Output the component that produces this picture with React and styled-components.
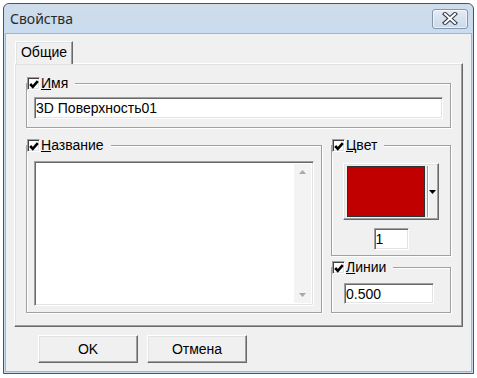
import React from 'react'
import styled, { createGlobalStyle } from 'styled-components'

const GlobalStyle = createGlobalStyle`
  body {
    margin: 0;
    background: #ffffff;
    font-family: "Liberation Sans", Arial, sans-serif;
    font-size: 14px;
    color: #000;
  }
`

const Window = styled.div`
  box-sizing: border-box;
  margin: 3px 0 0 3px;
  width: 471px;
  height: 371px;
  border: 1px solid #4a5461;
  border-radius: 6px 6px 0 0;
  background: #c9dbee;
  padding: 0 1px 1px;
  display: flex;
  flex-direction: column;
`

const TitleBar = styled.div`
  height: 29px;
  flex: none;
  display: flex;
  align-items: center;
  justify-content: space-between;
  padding: 0 4px 0 5px;
  background: linear-gradient(#cfdcea, #c9dcf0);
  border-radius: 5px 5px 0 0;
`

const Title = styled.span`
  font-family: "Noto Sans", "Open Sans", sans-serif;
  font-size: 14px;
  color: #2a2a2a;
`

const CloseButton = styled.div`
  box-sizing: border-box;
  width: 36px;
  height: 20px;
  border: 1px solid #8596ab;
  border-radius: 3px;
  background: linear-gradient(#e3ebf5, #cad9ea);
  box-shadow: inset 0 0 0 1px rgba(255, 255, 255, 0.6);
  display: flex;
  align-items: center;
  justify-content: center;
`

const Client = styled.div`
  flex: 1;
  background: #f0f0f0;
  border: 1px solid #a8b5c4;
  padding: 7px 8px 0 8px;
  display: flex;
  flex-direction: column;
`

const TabStrip = styled.div`
  display: flex;
  padding-left: 1px;
  height: 22px;
  position: relative;
  z-index: 1;
`

const Tab = styled.div`
  box-sizing: border-box;
  width: 58px;
  height: 23px;
  border-style: solid;
  border-width: 1px 1px 0 1px;
  border-color: #ffffff #696969 transparent #ffffff;
  box-shadow: inset -1px 0 0 #a0a0a0, inset 1px 1px 0 #e3e3e3;
  background: #f0f0f0;
  display: flex;
  align-items: center;
  justify-content: center;
  padding-bottom: 2px;
`

const TabPanel = styled.div`
  box-sizing: border-box;
  height: 264px;
  border: 1px solid;
  border-color: #ffffff #696969 #696969 #ffffff;
  box-shadow: inset -1px -1px 0 #a0a0a0, inset 1px 1px 0 #e3e3e3;
  padding: 19px 11px 13px 11px;
  display: flex;
  flex-direction: column;
  gap: 17px;
`

const Group = styled.div`
  position: relative;
  box-sizing: border-box;
  height: ${p => p.$h}px;
  border: 1px solid #a0a0a0;
  box-shadow: inset 1px 1px 0 #ffffff, 1px 1px 0 #ffffff;
  padding: ${p => p.$pad};
  display: flex;
  flex-direction: column;
  align-items: ${p => (p.$center ? 'center' : 'stretch')};
`

const Legend = styled.div`
  position: absolute;
  top: -8px;
  left: 0;
  display: flex;
  align-items: center;
  gap: 1px;
  padding-right: 7px;
  background: #f0f0f0;
  line-height: 15px;
  white-space: nowrap;
`

const CheckBox = styled.span`
  box-sizing: border-box;
  width: 13px;
  height: 13px;
  border: 1px solid;
  border-color: #a0a0a0 #ffffff #ffffff #a0a0a0;
  box-shadow: inset 1px 1px 0 #404040, inset -1px -1px 0 #e3e3e3;
  background: #fff;
  display: flex;
  align-items: center;
  justify-content: center;
  padding: 1px 0 0 1px;
`

const Row = styled.div`
  display: flex;
  gap: 9px;
`

const Column = styled.div`
  width: 120px;
  display: flex;
  flex-direction: column;
  gap: 11px;
`

const Sunken = styled.div`
  box-sizing: border-box;
  width: ${p => (p.$w ? `${p.$w}px` : 'auto')};
  height: ${p => p.$h}px;
  border: 1px solid;
  border-color: #a0a0a0 #ffffff #ffffff #a0a0a0;
  box-shadow: inset 1px 1px 0 #696969, inset -1px -1px 0 #e3e3e3;
  background: #fff;
  display: flex;
  align-items: ${p => (p.$area ? 'stretch' : 'center')};
  padding: ${p => (p.$area ? '2px 2px 2px 2px' : '0 0 0 1px')};
  line-height: 16px;
`

const AreaText = styled.div`
  flex: 1;
`

const ScrollBar = styled.div`
  width: 17px;
  background: #f3f3f3;
  display: flex;
  flex-direction: column;
  justify-content: space-between;
  align-items: center;
  padding: 6px 0;
`

const ColorButton = styled.div`
  box-sizing: border-box;
  width: 96px;
  height: 57px;
  border: 1px solid;
  border-color: #ffffff #696969 #696969 #ffffff;
  box-shadow: inset -1px -1px 0 #a0a0a0, inset 1px 1px 0 #e3e3e3;
  background: #f0f0f0;
  display: flex;
  padding: 2px 1px 2px 3px;
`

const Swatch = styled.div`
  box-sizing: border-box;
  width: 78px;
  border: 1px solid #303030;
  background: ${p => p.$color};
`

const DropPart = styled.div`
  flex: 1;
  margin-left: 2px;
  border-left: 1px solid #a0a0a0;
  box-shadow: inset 1px 0 0 #ffffff;
  display: flex;
  align-items: center;
  justify-content: center;
`

const ButtonRow = styled.div`
  display: flex;
  gap: 9px;
  padding-left: 24px;
  margin-top: 8px;
`

const Button = styled.div`
  box-sizing: border-box;
  width: 100px;
  height: 28px;
  border: 1px solid;
  border-color: #ffffff #696969 #696969 #ffffff;
  box-shadow: inset -1px -1px 0 #a0a0a0, inset 1px 1px 0 #e3e3e3;
  background: #f0f0f0;
  display: flex;
  align-items: center;
  justify-content: center;
`

const Check = () => (
  <svg width="10" height="9" viewBox="0 0 10 9">
    <path d="M1.2 4 L3.8 6.8 L8.8 1.2" fill="none" stroke="#000" strokeWidth="2.6" />
  </svg>
)

const GroupLabel = ({ first, rest }) => (
  <Legend>
    <CheckBox>
      <Check />
    </CheckBox>
    <span>
      <u>{first}</u>
      {rest}
    </span>
  </Legend>
)

const Arrow = ({ up, color = '#a8a8a8' }) => (
  <svg width="7" height="4" viewBox="0 0 7 4">
    <path d={up ? 'M0 4 L3.5 0 L7 4 Z' : 'M0 0 L7 0 L3.5 4 Z'} fill={color} />
  </svg>
)

const App = () => (
  <>
    <GlobalStyle />
    <Window>
      <TitleBar>
        <Title>Свойства</Title>
        <CloseButton>
          <svg width="16" height="13" viewBox="0 0 16 13">
            <path d="M3 2 L13 11 M13 2 L3 11" stroke="#3a3f47" strokeWidth="4.2" strokeLinecap="square" />
            <path d="M3 2 L13 11 M13 2 L3 11" stroke="#ffffff" strokeWidth="2" strokeLinecap="square" />
          </svg>
        </CloseButton>
      </TitleBar>
      <Client>
        <TabStrip>
          <Tab>Общие</Tab>
        </TabStrip>
        <TabPanel>
          <Group $h={45} $pad="13px 7px 0 7px">
            <GroupLabel first="И" rest="мя" />
            <Sunken $h={22}>3D Поверхность01</Sunken>
          </Group>
          <Row>
            <Group $h={168} $pad="15px 7px 0 7px" style={{ flex: 1 }}>
              <GroupLabel first="Н" rest="азвание" />
              <Sunken $h={145} $area>
                <AreaText />
                <ScrollBar>
                  <Arrow up />
                  <Arrow />
                </ScrollBar>
              </Sunken>
            </Group>
            <Column>
              <Group $h={111} $pad="17px 0 0 0" $center>
                <GroupLabel first="Ц" rest="вет" />
                <ColorButton>
                  <Swatch $color="#c00000" />
                  <DropPart>
                    <Arrow color="#000" />
                  </DropPart>
                </ColorButton>
                <div style={{ height: 8 }} />
                <Sunken $w={35} $h={22}>1</Sunken>
              </Group>
              <Group $h={46} $pad="15px 0 0 12px">
                <GroupLabel first="Л" rest="инии" />
                <Sunken $w={90} $h={21}>0.500</Sunken>
              </Group>
            </Column>
          </Row>
        </TabPanel>
        <ButtonRow>
          <Button>OK</Button>
          <Button>Отмена</Button>
        </ButtonRow>
      </Client>
    </Window>
  </>
)

export default App
